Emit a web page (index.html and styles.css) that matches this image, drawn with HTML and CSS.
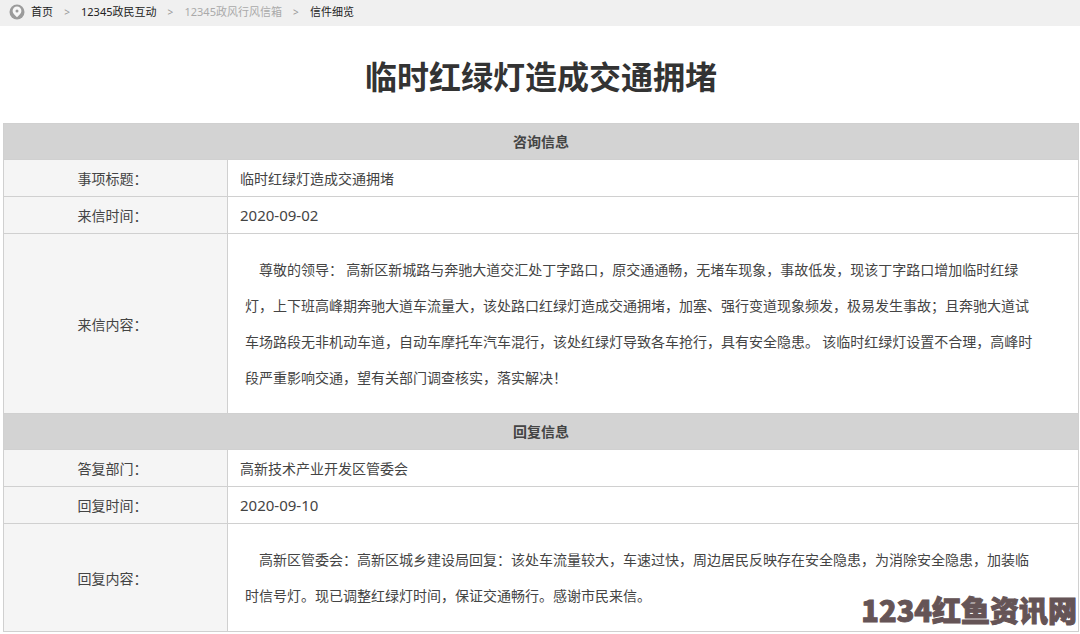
FILE: index.html
```
<!DOCTYPE html>
<html lang="zh-CN">
<head>
<meta charset="utf-8">
<meta name="viewport" content="width=device-width, initial-scale=1">
<title>临时红绿灯造成交通拥堵</title>
<link rel="stylesheet" href="styles.css">
</head>
<body>
<nav class="crumbs" aria-label="当前位置">
  <svg class="pin" viewBox="0 0 16 16" aria-hidden="true">
    <circle cx="8" cy="8" r="7.5" fill="#9b9b9b"/>
    <path d="M8 13.200C6 11 3.600 9.200 3.600 6.900a4.400 4.400 0 0 1 8.800 0C12.400 9.200 10 11 8 13.200Z" fill="#f7f7f7"/>
    <circle cx="8" cy="7" r="1.500" fill="#9b9b9b"/>
  </svg>
  <a href="#">首页</a><span class="sep">&gt;</span>
  <a href="#">12345政民互动</a><span class="sep">&gt;</span>
  <a href="#" class="muted">12345政风行风信箱</a><span class="sep">&gt;</span>
  <a href="#">信件细览</a>
</nav>
<main class="page">
  <h1 class="title">临时红绿灯造成交通拥堵</h1>
  <table class="letter">
    <colgroup><col class="col-label"><col></colgroup>
    <tbody>
      <tr><th class="section" colspan="2" scope="colgroup">咨询信息</th></tr>
      <tr><th class="label" scope="row">事项标题：</th><td class="value">临时红绿灯造成交通拥堵</td></tr>
      <tr><th class="label" scope="row">来信时间：</th><td class="value date">2020-09-02</td></tr>
      <tr><th class="label" scope="row">来信内容：</th><td class="content"><p>尊敬的领导： 高新区新城路与奔驰大道交汇处丁字路口，原交通通畅，无堵车现象，事故低发，现该丁字路口增加临时红绿灯，上下班高峰期奔驰大道车流量大，该处路口红绿灯造成交通拥堵，加塞、强行变道现象频发，极易发生事故；且奔驰大道试车场路段无非机动车道，自动车摩托车汽车混行，该处红绿灯导致各车抢行，具有安全隐患。 该临时红绿灯设置不合理，高峰时段严重影响交通，望有关部门调查核实，落实解决！</p></td></tr>
    </tbody>
    <tbody>
      <tr><th class="section" colspan="2" scope="colgroup">回复信息</th></tr>
      <tr><th class="label" scope="row">答复部门：</th><td class="value">高新技术产业开发区管委会</td></tr>
      <tr><th class="label" scope="row">回复时间：</th><td class="value date">2020-09-10</td></tr>
      <tr><th class="label" scope="row">回复内容：</th><td class="content"><p>高新区管委会：高新区城乡建设局回复：该处车流量较大，车速过快，周边居民反映存在安全隐患，为消除安全隐患，加装临时信号灯。现已调整红绿灯时间，保证交通畅行。感谢市民来信。</p></td></tr>
    </tbody>
  </table>
  <div class="watermark">1234红鱼资讯网</div>
</main>
</body>
</html>
```
FILE: styles.css
```
* { box-sizing: border-box; }
body {
  margin: 0;
  background: #fff;
  color: #444;
  font: 14px/36px "Noto Sans CJK SC", sans-serif;
}
.crumbs {
  display: flex;
  align-items: center;
  height: 26px;
  padding: 0 0 2px 9px;
  background: #f0f0f0;
  font: 11px/24px "Noto Sans", "Noto Sans CJK SC", sans-serif;
}
.crumbs a { color: #222; text-decoration: none; }
.crumbs .muted { color: #aaa; }
.pin { width: 16px; height: 16px; margin-right: 6px; }
.sep { width: 28px; text-align: center; color: #999; font-size: 10px; }
.page { position: relative; padding: 0 1px 1px 3px; }
.title {
  margin: 0;
  padding: 25px 0 24px;
  color: #333;
  font-size: 32px;
  line-height: 48px;
  text-align: center;
}
.letter {
  width: 100%;
  border-collapse: collapse;
  table-layout: fixed;
}
.col-label { width: 224px; }
.letter th, .letter td { padding: 0; border: 1px solid #d0d0d0; }
.letter .section {
  background: #d3d3d3;
  font-weight: bold;
  line-height: 35px;
  text-align: center;
}
.letter .label {
  padding-right: 6px;
  background: #f5f5f5;
  font-weight: normal;
  text-align: center;
}
.letter .value { padding-left: 12px; }
.letter .date { font-family: "Noto Sans", sans-serif; font-size: 15px; }
.letter .content { padding: 17px 36px 18px 17px; }
.content p { margin: 0; text-indent: 14px; }
.watermark {
  position: absolute;
  right: 3px;
  bottom: 8px;
  color: #655456;
  font-size: 29px;
  font-weight: 900;
  line-height: 32px;
  -webkit-text-stroke: 1px #655456;
}
```
